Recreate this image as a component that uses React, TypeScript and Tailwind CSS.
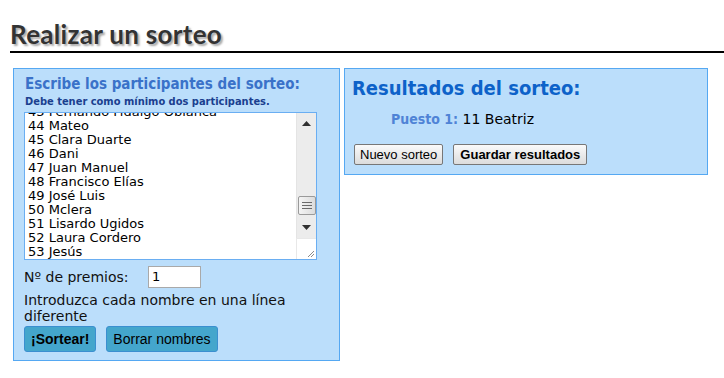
import React from "react";

const names = [
  "43 Fernando Fidalgo Oblanca",
  "44 Mateo",
  "45 Clara Duarte",
  "46 Dani",
  "47 Juan Manuel",
  "48 Francisco Elías",
  "49 José Luis",
  "50 Mclera",
  "51 Lisardo Ugidos",
  "52 Laura Cordero",
  "53 Jesús",
];

function FakeTextarea() {
  return (
    <div className="relative mt-[3px] h-[148px] w-[293px] border border-[#6aaef2] bg-white overflow-hidden">
      <div className="absolute left-[3px] top-[-8px] font-['DejaVu_Sans',sans-serif] text-[13px] leading-[14px] text-black whitespace-nowrap">
        {names.map((n) => (
          <div key={n}>{n}</div>
        ))}
      </div>
      {/* scrollbar */}
      <div className="absolute right-0 top-0 w-[20px] h-[125px] bg-[#ececec] border-l border-[#e4e4e4]">
        <svg className="absolute left-[5px] top-[8px]" width="9" height="5" viewBox="0 0 9 5">
          <path d="M0 5 L4.5 0 L9 5 Z" fill="#303030" />
        </svg>
        <div className="absolute left-[1px] top-[83px] w-[18px] h-[19px] rounded-[2px] border border-[#9a9a9a] bg-gradient-to-r from-[#f4f4f4] to-[#dcdcdc] flex flex-col items-center justify-center gap-[2px]">
          <div className="w-[10px] h-[1px] bg-[#6a6a6a]" />
          <div className="w-[10px] h-[1px] bg-[#6a6a6a]" />
          <div className="w-[10px] h-[1px] bg-[#6a6a6a]" />
        </div>
        <svg className="absolute left-[5px] top-[112px]" width="9" height="5" viewBox="0 0 9 5">
          <path d="M0 0 L4.5 5 L9 0 Z" fill="#303030" />
        </svg>
      </div>
      <div className="absolute right-0 bottom-0 w-[20px] h-[21px] bg-white border-l border-t border-[#e8e8e8]">
        <svg className="absolute right-[1px] bottom-[1px]" width="8" height="8" viewBox="0 0 8 8">
          <path d="M1 7 L7 1 M4 7 L7 4" stroke="#8a8a8a" strokeWidth="1" />
        </svg>
      </div>
    </div>
  );
}

export default function App() {
  return (
    <div className="w-[724px] h-[378px] bg-white overflow-hidden pl-[10px] pt-[18px]">
      <h1
        className="font-['Lato',sans-serif] font-bold text-[26px] leading-[32px] text-[#333333] tracking-[0.3px]"
        style={{ textShadow: "2px 2px 2px #aaaaaa" }}
      >
        Realizar un sorteo
      </h1>
      <div className="h-[2px] bg-black mt-[1px]" />
      <div className="flex items-start gap-[4px] pl-[3px] mt-[15px]">
        {/* Left panel */}
        <div className="w-[327px] h-[293px] border border-[#55a8f2] bg-[#bbdefb] pl-[10px] pt-[6px]">
          <div className="font-['DejaVu_Sans_Condensed','DejaVu_Sans',sans-serif] font-bold text-[15px] leading-[18px] text-[#3a72c9] pl-[1px]">
            Escribe los participantes del sorteo:
          </div>
          <div className="font-['DejaVu_Sans_Condensed','DejaVu_Sans',sans-serif] font-bold text-[11px] leading-[14px] text-[#1a3f8f] mt-[2px] pl-[1px]">
            Debe tener como mínimo dos participantes.
          </div>
          <FakeTextarea />
          <div className="flex items-center mt-[6px] font-['DejaVu_Sans',sans-serif] text-[14px] text-[#111]">
            <span className="w-[124px]">Nº de premios:</span>
            <div className="w-[53px] h-[22px] border border-[#a9a9a9] bg-white pl-[3px] text-[13px] leading-[20px] text-black">
              1
            </div>
          </div>
          <div className="mt-[4px] font-['DejaVu_Sans',sans-serif] text-[14px] leading-[16px] text-[#111] w-[290px]">
            Introduzca cada nombre en una línea diferente
          </div>
          <div className="flex gap-[10px] mt-[2px]">
            <button className="h-[26px] px-[6px] rounded-[3px] border border-[#3b8fd0] bg-[#44a6cc] font-['Liberation_Sans',sans-serif] font-bold text-[14px] text-black">
              ¡Sortear!
            </button>
            <button className="h-[26px] px-[6px] rounded-[3px] border border-[#3b8fd0] bg-[#44a6cc] font-['Liberation_Sans',sans-serif] text-[14px] text-black">
              Borrar nombres
            </button>
          </div>
        </div>
        {/* Right panel */}
        <div className="w-[364px] h-[107px] border border-[#55a8f2] bg-[#bbdefb] pl-[7px] pt-[7px]">
          <div className="font-['DejaVu_Sans_Condensed','DejaVu_Sans',sans-serif] font-bold text-[20px] leading-[24px] text-[#0d62c9]">
            Resultados del sorteo:
          </div>
          <div className="mt-[10px] pl-[39px] font-['DejaVu_Sans',sans-serif] text-[14px] leading-[18px]">
            <span className="font-['DejaVu_Sans_Condensed','DejaVu_Sans',sans-serif] font-bold text-[#4f83d6]">Puesto 1:</span>
            <span className="text-black"> 11 Beatriz</span>
          </div>
          <div className="flex gap-[10px] mt-[16px] pl-[2px]">
            <button className="h-[21px] px-[5px] rounded-[2px] border border-[#777] bg-gradient-to-b from-[#fafafa] to-[#dcdcdc] font-['Liberation_Sans',sans-serif] text-[13px] leading-[19px] text-black">
              Nuevo sorteo
            </button>
            <button className="h-[21px] px-[6px] rounded-[2px] border border-[#777] bg-gradient-to-b from-[#fafafa] to-[#dcdcdc] font-['Liberation_Sans',sans-serif] font-bold text-[13px] leading-[19px] text-black">
              Guardar resultados
            </button>
          </div>
        </div>
      </div>
    </div>
  );
}
